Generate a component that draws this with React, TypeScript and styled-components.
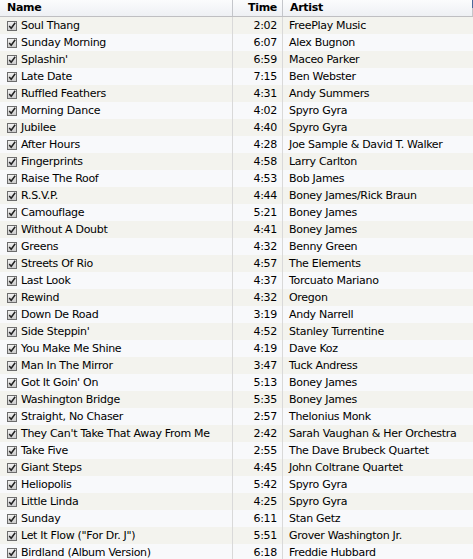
import React from 'react';
import { styled, createGlobalStyle } from 'styled-components';

const GlobalStyle = createGlobalStyle`
  html, body {
    margin: 0;
    padding: 0;
    background: #f8f9fb;
  }
  body {
    font-family: "DejaVu Sans", "Liberation Sans", sans-serif;
    font-size: 11px;
    letter-spacing: -0.3px;
    color: #000;
    overflow: hidden;
  }
`;

type Track = { name: string; time: string; artist: string };

const tracks: Track[] = [
  { name: 'Soul Thang', time: '2:02', artist: 'FreePlay Music' },
  { name: 'Sunday Morning', time: '6:07', artist: 'Alex Bugnon' },
  { name: "Splashin'", time: '6:59', artist: 'Maceo Parker' },
  { name: 'Late Date', time: '7:15', artist: 'Ben Webster' },
  { name: 'Ruffled Feathers', time: '4:31', artist: 'Andy Summers' },
  { name: 'Morning Dance', time: '4:02', artist: 'Spyro Gyra' },
  { name: 'Jubilee', time: '4:40', artist: 'Spyro Gyra' },
  { name: 'After Hours', time: '4:28', artist: 'Joe Sample & David T. Walker' },
  { name: 'Fingerprints', time: '4:58', artist: 'Larry Carlton' },
  { name: 'Raise The Roof', time: '4:53', artist: 'Bob James' },
  { name: 'R.S.V.P.', time: '4:44', artist: 'Boney James/Rick Braun' },
  { name: 'Camouflage', time: '5:21', artist: 'Boney James' },
  { name: 'Without A Doubt', time: '4:41', artist: 'Boney James' },
  { name: 'Greens', time: '4:32', artist: 'Benny Green' },
  { name: 'Streets Of Rio', time: '4:57', artist: 'The Elements' },
  { name: 'Last Look', time: '4:37', artist: 'Torcuato Mariano' },
  { name: 'Rewind', time: '4:32', artist: 'Oregon' },
  { name: 'Down De Road', time: '3:19', artist: 'Andy Narrell' },
  { name: "Side Steppin'", time: '4:52', artist: 'Stanley Turrentine' },
  { name: 'You Make Me Shine', time: '4:19', artist: 'Dave Koz' },
  { name: 'Man In The Mirror', time: '3:47', artist: 'Tuck Andress' },
  { name: "Got It Goin' On", time: '5:13', artist: 'Boney James' },
  { name: 'Washington Bridge', time: '5:35', artist: 'Boney James' },
  { name: 'Straight, No Chaser', time: '2:57', artist: 'Thelonius Monk' },
  { name: "They Can't Take That Away From Me", time: '2:42', artist: 'Sarah Vaughan & Her Orchestra' },
  { name: 'Take Five', time: '2:55', artist: 'The Dave Brubeck Quartet' },
  { name: 'Giant Steps', time: '4:45', artist: 'John Coltrane Quartet' },
  { name: 'Heliopolis', time: '5:42', artist: 'Spyro Gyra' },
  { name: 'Little Linda', time: '4:25', artist: 'Spyro Gyra' },
  { name: 'Sunday', time: '6:11', artist: 'Stan Getz' },
  { name: 'Let It Flow ("For Dr. J")', time: '5:51', artist: 'Grover Washington Jr.' },
  { name: 'Birdland (Album Version)', time: '6:18', artist: 'Freddie Hubbard' },
];

const Table = styled.div`
  width: 473px;
  display: flex;
  flex-direction: column;
`;

const HeaderRow = styled.div`
  display: grid;
  grid-template-columns: 233px 50px 1fr;
  height: 16px;
  border-bottom: 1px solid #bfbfc2;
  background: linear-gradient(#fbfcfd, #eef0f4);
  position: relative;
`;

const HeaderCell = styled.div<{ $align?: 'left' | 'right' }>`
  font-weight: bold;
  line-height: 16px;
  padding: 0 5px 0 ${(p) => (p.$align === 'right' ? '0' : '7px')};
  text-align: ${(p) => p.$align ?? 'left'};
  border-right: 1px solid #c4c6cb;
  white-space: nowrap;
  overflow: hidden;

  &:last-child {
    border-right: none;
    padding-left: 6px;
  }
`;

const ScrollCorner = styled.div`
  position: absolute;
  right: 0;
  top: 0;
  width: 1px;
  height: 8px;
  background: #4a6a9a;
`;

const Row = styled.div<{ $odd: boolean }>`
  display: grid;
  grid-template-columns: 233px 50px 1fr;
  height: 17px;
  background: ${(p) => (p.$odd ? '#f3f3ee' : '#f8f9fb')};
`;

const Cell = styled.div<{ $align?: 'left' | 'right' }>`
  line-height: 17px;
  text-align: ${(p) => p.$align ?? 'left'};
  padding: 0 5px 0 6px;
  border-right: 1px solid #d9d9d9;
  white-space: nowrap;
  overflow: hidden;

  &:last-child {
    border-right: none;
  }
`;

const NameCell = styled(Cell)`
  display: flex;
  align-items: center;
  gap: 4px;
  padding-left: 7px;
`;

const Check = () => (
  <svg width="10" height="10" viewBox="0 0 10 10" style={{ flex: 'none' }}>
    <defs>
      <linearGradient id="cb" x1="0" y1="0" x2="0" y2="1">
        <stop offset="0" stopColor="#f4f4f4" />
        <stop offset="1" stopColor="#c9c9c9" />
      </linearGradient>
    </defs>
    <rect x="0.5" y="0.5" width="9" height="9" fill="url(#cb)" stroke="#6d6d6d" />
    <path d="M2.2 5 L4.2 7.2 L8.2 1.8" fill="none" stroke="#222" strokeWidth="1.5" />
  </svg>
);

export default function App() {
  return (
    <>
      <GlobalStyle />
      <Table>
        <HeaderRow>
          <HeaderCell>Name</HeaderCell>
          <HeaderCell $align="right">Time</HeaderCell>
          <HeaderCell>Artist</HeaderCell>
          <ScrollCorner />
        </HeaderRow>
        {tracks.map((t, i) => (
          <Row key={t.name} $odd={i % 2 === 0}>
            <NameCell>
              <Check />
              <span>{t.name}</span>
            </NameCell>
            <Cell $align="right">{t.time}</Cell>
            <Cell>{t.artist}</Cell>
          </Row>
        ))}
      </Table>
    </>
  );
}
